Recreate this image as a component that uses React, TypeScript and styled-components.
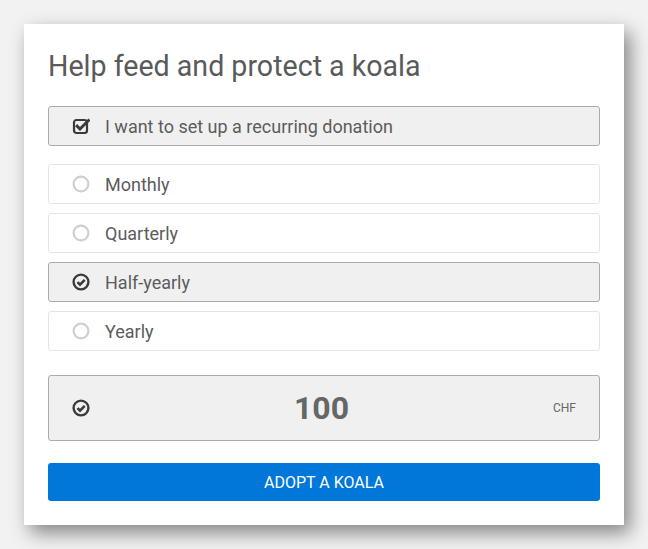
import { createGlobalStyle, styled } from "styled-components";

const GlobalStyle = createGlobalStyle`
  html, body {
    margin: 0;
    padding: 0;
    background: #f2f2f2;
  }
  body {
    font-family: Roboto, "Liberation Sans", sans-serif;
  }
`;

const Page = styled.div`
  padding: 24px;
  width: 600px;
`;

const Card = styled.div`
  background: #fff;
  padding: 24px;
  box-shadow: 6px 8px 18px rgba(0, 0, 0, 0.45);
  display: flex;
  flex-direction: column;
`;

const Title = styled.h1`
  margin: 0 0 23px;
  font-size: 28.6px;
  line-height: 34px;
  font-weight: 400;
  color: #5a5a5a;
  padding-top: 1px;
`;

const Option = styled.label<{ $active?: boolean }>`
  display: flex;
  align-items: center;
  gap: 15px;
  height: 40px;
  box-sizing: border-box;
  padding: 0 23px;
  background: ${(p) => (p.$active ? "#f0f0f0" : "#fff")};
  border: 1px solid ${(p) => (p.$active ? "#aaa" : "#e4e4e4")};
  border-radius: 3px;
  font-size: 18px;
  color: #5c5c5c;
`;

const Icon = styled.span<{ $muted?: boolean }>`
  display: flex;
  width: 18px;
  height: 18px;
  justify-content: center;
  align-items: center;
  color: ${(p) => (p.$muted ? "#cfcfcf" : "#3a3a3a")};
  svg {
    display: block;
  }
`;

const Options = styled.div`
  display: flex;
  flex-direction: column;
  gap: 9px;
  margin: 18px 0 24px;
`;

const Amount = styled.div`
  display: flex;
  align-items: center;
  height: 66px;
  box-sizing: border-box;
  padding: 0 23px;
  background: #f0f0f0;
  border: 1px solid #aaa;
  border-radius: 3px;
`;

const AmountValue = styled.div`
  flex: 1;
  text-align: center;
  font-size: 32px;
  font-weight: 700;
  color: #666;
`;

const Currency = styled.span`
  font-size: 12px;
  color: #666;
`;

const Button = styled.button`
  margin-top: 22px;
  height: 38px;
  border: none;
  border-radius: 3px;
  background: #0077d9;
  color: #fff;
  font-family: inherit;
  font-size: 16px;
  text-transform: uppercase;
`;

const CheckSquare = () => (
  <svg width="18" height="18" viewBox="0 0 18 18">
    <rect x="2" y="3" width="13" height="13" rx="2.5" fill="none" stroke="currentColor" strokeWidth="2.2" />
    <path d="M5.2 9.2 L8 12 L16.5 3.5" fill="none" stroke="currentColor" strokeWidth="3" strokeLinecap="square" />
  </svg>
);

const CheckCircle = () => (
  <svg width="18" height="18" viewBox="0 0 18 18">
    <circle cx="9" cy="9" r="7.4" fill="none" stroke="currentColor" strokeWidth="2.4" />
    <path d="M5.5 9.1 L8 11.6 L12.7 6.9" fill="none" stroke="currentColor" strokeWidth="2.6" />
  </svg>
);

const EmptyCircle = () => (
  <svg width="18" height="18" viewBox="0 0 18 18">
    <circle cx="9" cy="9" r="7.4" fill="none" stroke="currentColor" strokeWidth="2.2" />
  </svg>
);

const periods = [
  { label: "Monthly", active: false },
  { label: "Quarterly", active: false },
  { label: "Half-yearly", active: true },
  { label: "Yearly", active: false },
];

function App() {
  return (
    <>
      <GlobalStyle />
      <Page>
        <Card>
          <Title>Help feed and protect a koala</Title>
          <Option $active>
            <Icon><CheckSquare /></Icon>
            I want to set up a recurring donation
          </Option>
          <Options>
            {periods.map((p) => (
              <Option key={p.label} $active={p.active}>
                <Icon $muted={!p.active}>
                  {p.active ? <CheckCircle /> : <EmptyCircle />}
                </Icon>
                {p.label}
              </Option>
            ))}
          </Options>
          <Amount>
            <Icon><CheckCircle /></Icon>
            <AmountValue>100</AmountValue>
            <Currency>CHF</Currency>
          </Amount>
          <Button>Adopt a koala</Button>
        </Card>
      </Page>
    </>
  );
}

export default App;
